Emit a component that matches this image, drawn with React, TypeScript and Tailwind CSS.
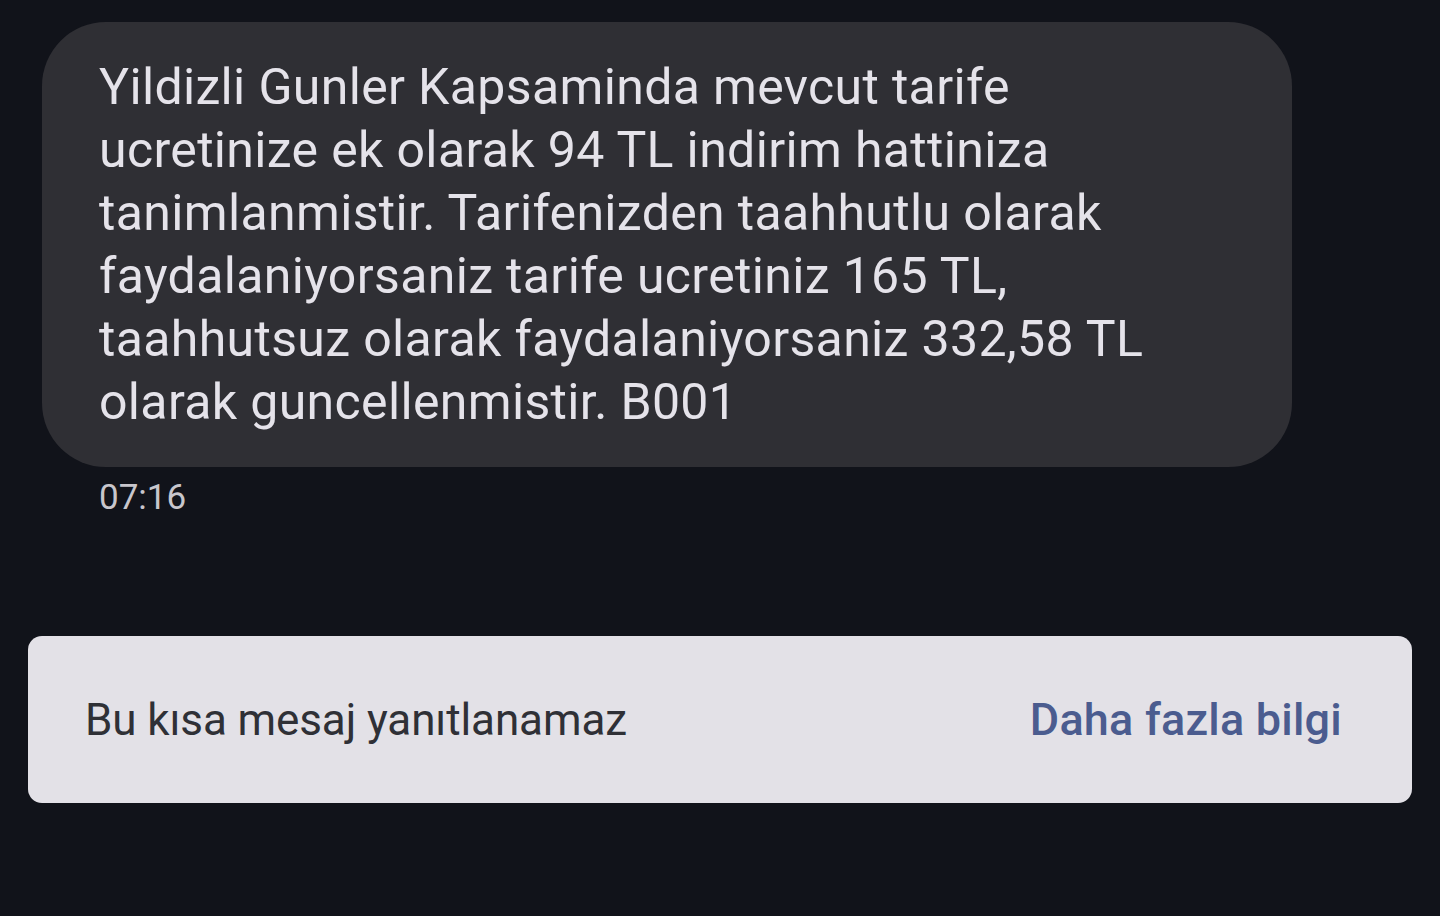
const lines = [
  'Yildizli Gunler Kapsaminda mevcut tarife',
  'ucretinize ek olarak 94 TL indirim hattiniza',
  'tanimlanmistir. Tarifenizden taahhutlu olarak',
  'faydalaniyorsaniz tarife ucretiniz 165 TL,',
  'taahhutsuz olarak faydalaniyorsaniz 332,58 TL',
  'olarak guncellenmistir. B001',
];

export default function App() {
  return (
    <div className="min-h-[916px] w-full bg-[#11131a] font-['Roboto',sans-serif] overflow-hidden">
      <div className="pl-[42px] pt-[22px]">
        <div className="w-[1250px] h-[445px] rounded-[64px] bg-[#2f2f34] pl-[57px] pt-[34px] text-[50px] leading-[63px] tracking-[0.35px] text-[#e5e3ea]">
          {lines.map((l) => (
            <div key={l} className="whitespace-nowrap">{l}</div>
          ))}
        </div>
        <div className="pl-[57px] pt-[9px] text-[35px] leading-[44px] text-[#c8c6cc]">07:16</div>
      </div>
      <div className="px-[28px] pt-[116px]">
        <div className="h-[167px] rounded-[14px] bg-[#e3e1e7] flex items-center justify-between pl-[57px] pr-[70px]">
          <span className="text-[44px] tracking-[-0.1px] text-[#2f3036]">Bu kısa mesaj yanıtlanamaz</span>
          <span className="text-[45px] font-medium tracking-[0.2px] text-[#4b5c8f]">Daha fazla bilgi</span>
        </div>
      </div>
    </div>
  );
}
